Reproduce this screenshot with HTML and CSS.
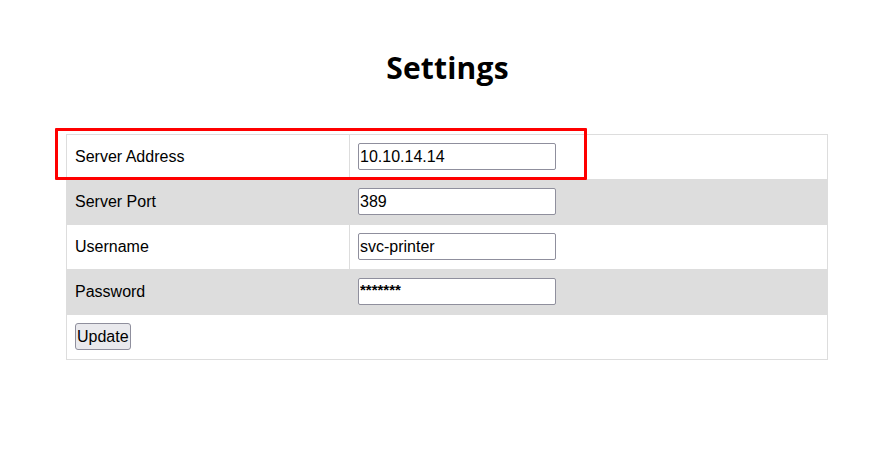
FILE: index.html
```html
<!DOCTYPE html>
<html>
<head>
<meta charset="utf-8">
<title>Settings</title>
<link rel="stylesheet" href="styles.css">
</head>
<body>
<h1 class="title">Settings</h1>
<div class="wrap">
  <form class="settings">
    <table class="grid">
      <tr>
        <td class="label">Server Address</td>
        <td><input class="field" type="text" value="10.10.14.14"></td>
      </tr>
      <tr class="alt">
        <td class="label">Server Port</td>
        <td><input class="field" type="text" value="389"></td>
      </tr>
      <tr>
        <td class="label">Username</td>
        <td><input class="field" type="text" value="svc-printer"></td>
      </tr>
      <tr class="alt">
        <td class="label">Password</td>
        <td><input class="field pass" type="text" value="*******"></td>
      </tr>
      <tr>
        <td colspan="2" class="label"><button class="btn" type="button">Update</button></td>
      </tr>
    </table>
  </form>
  <div class="highlight"></div>
</div>
</body>
</html>
```
FILE: styles.css
```css
html, body {
  margin: 0;
  padding: 0;
  background: #fff;
}
body {
  font-family: "Liberation Sans", Arial, sans-serif;
  font-size: 16px;
  color: #000;
}
.title {
  font-family: "Open Sans", "Noto Sans", sans-serif;
  font-weight: 700;
  font-size: 30px;
  line-height: 36px;
  text-align: center;
  margin: 50px 0 0;
  letter-spacing: 0.2px;
}
.wrap {
  position: relative;
  width: 762px;
  margin: 48px 0 0 66px;
}
.grid {
  width: 762px;
  border-collapse: collapse;
  border: 1px solid #dddddd;
}
.grid td {
  border: 1px solid #dddddd;
  padding: 8px 8px 9px;
  height: 27px;
  vertical-align: middle;
}
.grid td.label {
  width: 266px;
}
.grid tr.alt td {
  background: #dddddd;
}
.field {
  box-sizing: border-box;
  width: 198px;
  height: 27px;
  border: 1px solid #8f8f9d;
  border-radius: 2px;
  padding: 1px 1px;
  font-family: "Liberation Sans", Arial, sans-serif;
  font-size: 16px;
  color: #000;
  background: #fff;
  display: block;
}
.field.pass {
  font-size: 15px;
  font-weight: 700;
  padding-bottom: 6px;
}
.btn {
  box-sizing: border-box;
  height: 27px;
  padding: 0 1px;
  border: 1px solid #8f8f9d;
  border-radius: 3px;
  background: #e9e9ed;
  font-family: "Liberation Sans", Arial, sans-serif;
  font-size: 16px;
  color: #000;
  display: block;
}
.highlight {
  position: absolute;
  left: -11px;
  top: -6px;
  width: 532px;
  height: 52px;
  box-sizing: border-box;
  border: 3px solid #ff0000;
  border-radius: 1px;
}
```
